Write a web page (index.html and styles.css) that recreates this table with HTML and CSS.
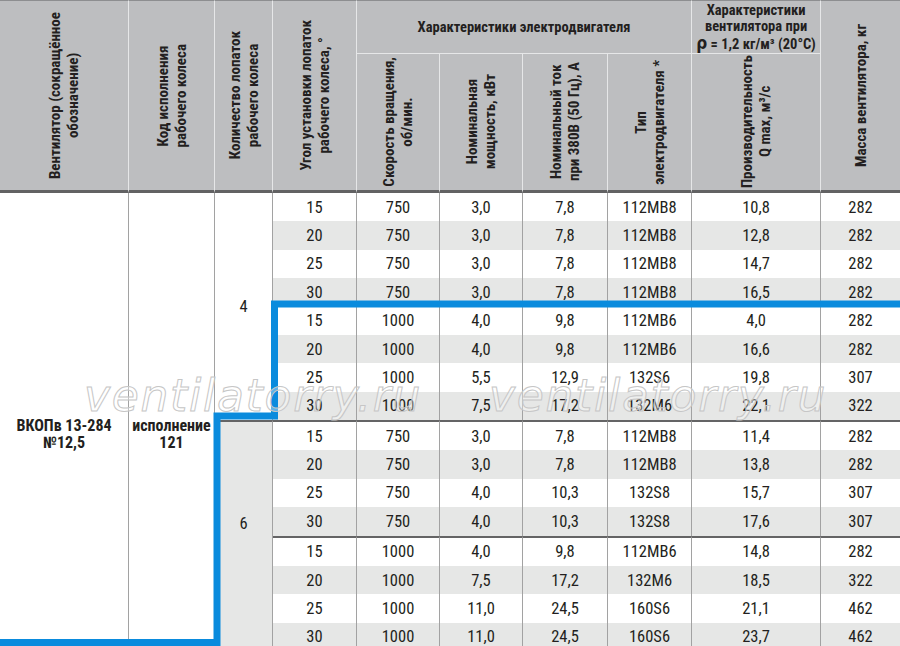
FILE: index.html
```html
<!DOCTYPE html>
<html lang="ru">
<head>
<meta charset="utf-8">
<title>ВКОПв 13-284 №12,5</title>
<link rel="stylesheet" href="styles.css">
</head>
<body>
<div class="sheet">
  <table class="spec">
    <colgroup>
      <col class="w-fan"><col class="w-code"><col class="w-blades"><col class="w-angle">
      <col class="w-speed"><col class="w-power"><col class="w-current"><col class="w-type">
      <col class="w-flow"><col class="w-mass">
    </colgroup>
    <thead>
      <tr class="h1">
        <th rowspan="2" class="rot span2"><div class="rotbox tall"><span>Вентилятор (сокращённое<br>обозначение)</span></div></th>
        <th rowspan="2" class="rot span2"><div class="rotbox tall"><span>Код исполнения<br>рабочего колеса</span></div></th>
        <th rowspan="2" class="rot span2"><div class="rotbox tall"><span>Количество лопаток<br>рабочего колеса</span></div></th>
        <th rowspan="2" class="rot span2"><div class="rotbox tall"><span>Угол установки лопаток<br>рабочего колеса, °</span></div></th>
        <th colspan="4" class="grp">Характеристики электродвигателя</th>
        <th class="grp">Характеристики<br>вентилятора при<br><span class="rho">ρ</span> = 1,2 кг/м³ (20°С)</th>
        <th rowspan="2" class="rot span2 last"><div class="rotbox tall"><span>Масса вентилятора, кг</span></div></th>
      </tr>
      <tr class="h2">
        <th class="rot"><div class="rotbox"><span>Скорость вращения,<br>об/мин.</span></div></th>
        <th class="rot"><div class="rotbox"><span>Номинальная<br>мощность, кВт</span></div></th>
        <th class="rot"><div class="rotbox"><span>Номинальный ток<br>при 380В (50 Гц), А</span></div></th>
        <th class="rot"><div class="rotbox"><span>Тип<br>электродвигателя *</span></div></th>
        <th class="rot"><div class="rotbox"><span>Производительность<br>Q max, м³/с</span></div></th>
      </tr>
    </thead>
    <tbody>
      <tr>
        <td rowspan="16" class="name"><b>ВКОПв 13-284<br>№12,5</b></td>
        <td rowspan="16" class="name"><b>исполнение<br>121</b></td>
        <td rowspan="8" class="blades">4</td>
        <td>15</td><td>750</td><td>3,0</td><td>7,8</td><td>112MB8</td><td>10,8</td><td class="last">282</td>
      </tr>
      <tr class="alt"><td>20</td><td>750</td><td>3,0</td><td>7,8</td><td>112MB8</td><td>12,8</td><td class="last">282</td></tr>
      <tr><td>25</td><td>750</td><td>3,0</td><td>7,8</td><td>112MB8</td><td>14,7</td><td class="last">282</td></tr>
      <tr class="alt"><td>30</td><td>750</td><td>3,0</td><td>7,8</td><td>112MB8</td><td>16,5</td><td class="last">282</td></tr>
      <tr><td>15</td><td>1000</td><td>4,0</td><td>9,8</td><td>112MB6</td><td>4,0</td><td class="last">282</td></tr>
      <tr class="alt"><td>20</td><td>1000</td><td>4,0</td><td>9,8</td><td>112MB6</td><td>16,6</td><td class="last">282</td></tr>
      <tr><td>25</td><td>1000</td><td>5,5</td><td>12,9</td><td>132S6</td><td>19,8</td><td class="last">307</td></tr>
      <tr class="alt"><td>30</td><td>1000</td><td>7,5</td><td>17,2</td><td>132M6</td><td>22,1</td><td class="last">322</td></tr>
      <tr class="group">
        <td rowspan="8" class="blades six">6</td>
        <td>15</td><td>750</td><td>3,0</td><td>7,8</td><td>112MB8</td><td>11,4</td><td class="last">282</td>
      </tr>
      <tr class="alt"><td>20</td><td>750</td><td>3,0</td><td>7,8</td><td>112MB8</td><td>13,8</td><td class="last">282</td></tr>
      <tr><td>25</td><td>750</td><td>4,0</td><td>10,3</td><td>132S8</td><td>15,7</td><td class="last">307</td></tr>
      <tr class="alt"><td>30</td><td>750</td><td>4,0</td><td>10,3</td><td>132S8</td><td>17,6</td><td class="last">307</td></tr>
      <tr class="group"><td>15</td><td>1000</td><td>4,0</td><td>9,8</td><td>112MB6</td><td>14,8</td><td class="last">282</td></tr>
      <tr class="alt"><td>20</td><td>1000</td><td>7,5</td><td>17,2</td><td>132M6</td><td>18,5</td><td class="last">322</td></tr>
      <tr><td>25</td><td>1000</td><td>11,0</td><td>24,5</td><td>160S6</td><td>21,1</td><td class="last">462</td></tr>
      <tr class="alt end"><td>30</td><td>1000</td><td>11,0</td><td>24,5</td><td>160S6</td><td>23,7</td><td class="last">462</td></tr>
    </tbody>
  </table>
  <svg class="mark" width="900" height="646" viewBox="0 0 900 646" aria-hidden="true">
    <path d="M904 304H274.5V416H217V642.5H-4" fill="none" stroke="#0a8bdd" stroke-width="7" stroke-linejoin="miter"/>
  </svg>
  <div class="wm wm-left">ventilatorry.ru</div>
  <div class="wm wm-right">ventilatorry.ru</div>
</div>
</body>
</html>
```
FILE: styles.css
```css
:root {
  --narrow: "Roboto Condensed", "Roboto", "Liberation Sans", sans-serif;
  --ink: #231f20;
  --head: #bdbec0;
  --stripe: #e6e7e6;
  --grid: #a2a2a2;
}

body {
  margin: 0;
  background: #fff;
}

.sheet {
  position: relative;
  width: 900px;
  height: 646px;
  overflow: hidden;
}

.spec {
  width: 900px;
  table-layout: fixed;
  border-collapse: separate;
  border-spacing: 0;
  font-family: var(--narrow);
  font-stretch: 75%;
  color: var(--ink);
}

.w-fan { width: 129px; }
.w-code { width: 86px; }
.w-blades { width: 58px; }
.w-angle { width: 84px; }
.w-speed { width: 83px; }
.w-power { width: 83px; }
.w-current { width: 85px; }
.w-type { width: 84px; }
.w-flow { width: 129px; }
.w-mass { width: 79px; }

/* header */
th {
  background: var(--head);
  font-weight: 700;
  font-size: 14.5px;
  line-height: 16px;
  padding: 0;
  text-align: center;
  vertical-align: middle;
  white-space: nowrap;
  border-right: 1px solid #e6e7e8;
}

th.last { border-right: 0; }

.h1 { height: 53px; }
.h2 { height: 139px; }

.h1 th { border-top: 1px solid #8d8e90; }

.h1 th.grp {
  border-bottom: 1px solid #e6e7e8;
  padding-top: 2px;
}

.h1 th.span2,
.h2 th { border-bottom: 3px solid #626263; }

.rotbox {
  height: 135px;
  display: flex;
  align-items: center;
  justify-content: center;
}

.rotbox.tall { height: 188px; }

.rotbox span {
  display: block;
  flex: none;
  writing-mode: vertical-rl;
  transform: rotate(180deg);
  white-space: nowrap;
  font-size: 15px;
  line-height: 18px;
}

.rho {
  font-family: "DejaVu Sans", sans-serif;
  font-size: 17px;
  font-weight: 700;
}

/* body */
td {
  height: 28.375px;
  padding: 0;
  font-size: 16.5px;
  text-align: center;
  vertical-align: middle;
  background: #fff;
  border-right: 1px solid var(--grid);
}

td.last { border-right: 0; }

tr.alt td { background: var(--stripe); }

tr.group td { border-top: 2px solid #646465; }

tr.end td,
td.name,
td.six { border-bottom: 1px solid var(--grid); }

td.name {
  padding-top: 24px;
  font-size: 16px;
  line-height: 17px;
  white-space: nowrap;
}

td.blades { background: #fff; }

td.six {
  background: var(--stripe);
  padding-bottom: 26px;
}

/* highlight outline and watermark over the table */
.mark {
  position: absolute;
  left: 0;
  top: 0;
  pointer-events: none;
}

.wm {
  position: absolute;
  top: 374px;
  font-family: "DejaVu Sans", sans-serif;
  font-style: oblique;
  font-size: 44px;
  line-height: 44px;
  letter-spacing: 1.7px;
  color: rgba(255, 255, 255, 0.35);
  -webkit-text-stroke: 1px #c6c6c6;
  white-space: nowrap;
  pointer-events: none;
}

.wm-left { left: 84px; }
.wm-right { left: 489px; }
```
